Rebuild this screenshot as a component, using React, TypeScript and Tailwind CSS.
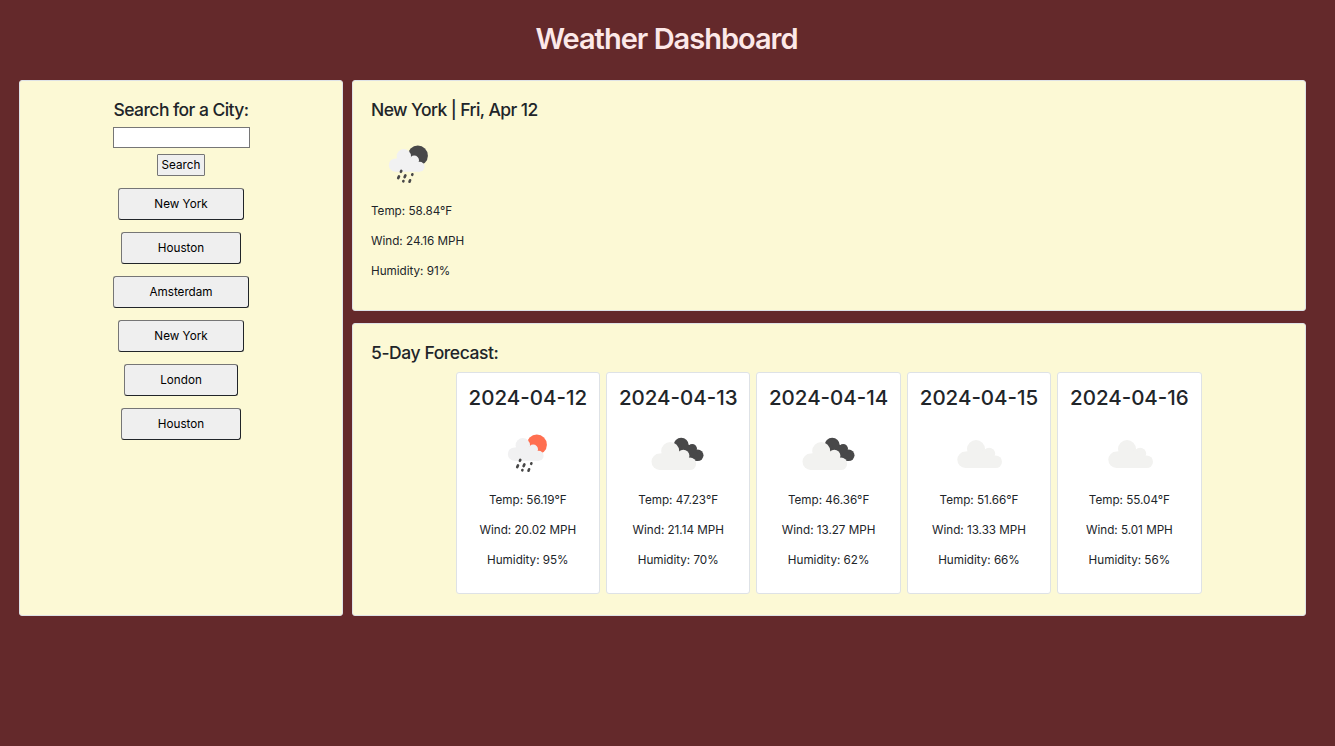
import React from "react";

type Sky = "rain-day" | "rain-night" | "broken" | "scattered";

const history = [
  { city: "New York", width: "w-[126px]" },
  { city: "Houston", width: "w-[120px]" },
  { city: "Amsterdam", width: "w-[136px]" },
  { city: "New York", width: "w-[126px]" },
  { city: "London", width: "w-[114px]" },
  { city: "Houston", width: "w-[120px]" },
];

const forecast: { date: string; sky: Sky; temp: string; wind: string; humidity: string }[] = [
  { date: "2024-04-12", sky: "rain-day", temp: "56.19", wind: "20.02", humidity: "95" },
  { date: "2024-04-13", sky: "broken", temp: "47.23", wind: "21.14", humidity: "70" },
  { date: "2024-04-14", sky: "broken", temp: "46.36", wind: "13.27", humidity: "62" },
  { date: "2024-04-15", sky: "scattered", temp: "51.66", wind: "13.33", humidity: "66" },
  { date: "2024-04-16", sky: "scattered", temp: "55.04", wind: "5.01", humidity: "56" },
];

function Cloud() {
  return (
    <g fill="#f2f2f0">
      <circle cx="19.7" cy="45.8" r="8.2" />
      <circle cx="30.2" cy="35" r="9" />
      <circle cx="43.3" cy="39.8" r="6.1" />
      <circle cx="49.9" cy="47.7" r="6.3" />
      <path d="M19.7 54V38L30 34L43 38L50 44V54Z" />
    </g>
  );
}

function RainCloud() {
  return (
    <>
      <g fill="#f1f1f2">
        <circle cx="24.5" cy="38.1" r="6.7" />
        <circle cx="32.8" cy="29.3" r="7.2" />
        <circle cx="43.2" cy="33.3" r="4.8" />
        <circle cx="48.6" cy="39.8" r="5" />
        <path d="M24.5 44.8V32L33 28L43 32L48.6 37V44.8Z" />
      </g>
      <g stroke="#484848" strokeWidth="2.6" strokeLinecap="round">
        <path d="M30.3 43.9L29.9 44.8M28 49.4L27.2 51.1M34.4 48.4L33.6 50.1M32.4 54L32.3 54.3M41.4 47.3L41.2 47.8M39.1 53.3L38.5 54.7" />
      </g>
    </>
  );
}

function SkyIcon({ sky }: { sky: Sky }) {
  return (
    <svg viewBox="0 0 75 75" className="size-[75px] shrink-0">
      {sky === "scattered" && (
        <g transform="translate(4.8 -2)">
          <Cloud />
        </g>
      )}
      {sky === "broken" && (
        <>
          <g fill="#484849">
            <circle cx="41.2" cy="29.3" r="7.6" />
            <circle cx="52.2" cy="32.8" r="4.8" />
            <circle cx="57.7" cy="39.3" r="5.8" />
            <path d="M42 29L52 29L58 38V45L50 44L40 36Z" />
          </g>
          <Cloud />
        </>
      )}
      {(sky === "rain-day" || sky === "rain-night") && (
        <>
          <circle cx="46.8" cy="28.7" r="10.1" fill={sky === "rain-day" ? "#ff6f50" : "#484849"} />
          <RainCloud />
        </>
      )}
    </svg>
  );
}

function Reading({ temp, wind, humidity }: { temp: string; wind: string; humidity: string }) {
  return (
    <div className="flex flex-col gap-3 text-[11.7px] leading-[18px] tracking-[-0.02px]">
      <p>Temp: {temp}°F</p>
      <p>Wind: {wind} MPH</p>
      <p>Humidity: {humidity}%</p>
    </div>
  );
}

export default function App() {
  return (
    <div className="min-h-[746px] bg-[#64292b] font-['Inter','Liberation_Sans',sans-serif] text-[#212529]">
      <header className="flex h-20 justify-center pt-5 pr-[2px]">
        <h1 className="text-[29px] leading-[37px] font-semibold tracking-[-1px] text-[#fce8e8]">Weather Dashboard</h1>
      </header>
      <main className="flex h-[536px] gap-[9px] pr-[29px] pl-[19px]">
        <aside className="flex w-[324px] shrink-0 flex-col items-center rounded-[3px] border border-[#dee2e6] bg-[#fcf9d5] pt-[18px]">
          <h2 className="text-[17.5px] leading-[22px] font-medium tracking-[-0.56px]">Search for a City:</h2>
          <input
            aria-label="City"
            className="mt-[6px] h-[21px] w-[137px] border border-[#767676] bg-white px-1 text-[12px] outline-none"
          />
          <button className="mt-[6px] h-[22px] w-12 rounded-[1px] border border-[#767676] bg-[#efefef] text-[11.7px] leading-[18px] text-black">
            Search
          </button>
          <div className="mt-3 flex flex-col items-center gap-3">
            {history.map((item, i) => (
              <button
                key={i}
                className={`${item.width} h-8 rounded-[3px] border border-t-[#767676] border-r-[#212529] border-b-[#212529] border-l-[#767676] bg-[#efefef] text-[11.7px] leading-[18px] text-black`}
              >
                {item.city}
              </button>
            ))}
          </div>
        </aside>
        <div className="flex min-w-0 flex-1 flex-col gap-3">
          <section className="h-[231px] rounded-[3px] border border-[#dee2e6] bg-[#fcf9d5] pt-[18px] pl-[18px]">
            <h2 className="text-[17.5px] leading-[22px] font-medium tracking-[-0.59px]">New York | Fri, Apr 12</h2>
            <div className="mt-[6px]">
              <SkyIcon sky="rain-night" />
            </div>
            <Reading temp="58.84" wind="24.16" humidity="91" />
          </section>
          <section className="flex-1 rounded-[3px] border border-[#dee2e6] bg-[#fcf9d5] pt-[18px]">
            <h2 className="pl-[18px] text-[17.5px] leading-[22px] font-medium tracking-[-0.42px]">5-Day Forecast:</h2>
            <div className="mt-[8px] flex justify-center gap-[6px] pr-[0.8px]">
              {forecast.map((day) => (
                <article
                  key={day.date}
                  className="flex h-[222px] w-[144.4px] flex-col items-center rounded-[3px] border border-[#dee2e6] bg-white pt-3 text-center"
                >
                  <h3 className="text-[20.5px] leading-[25px] font-medium">{day.date}</h3>
                  <div className="mt-[6px] mr-[0.5px]">
                    <SkyIcon sky={day.sky} />
                  </div>
                  <Reading temp={day.temp} wind={day.wind} humidity={day.humidity} />
                </article>
              ))}
            </div>
          </section>
        </div>
      </main>
    </div>
  );
}
